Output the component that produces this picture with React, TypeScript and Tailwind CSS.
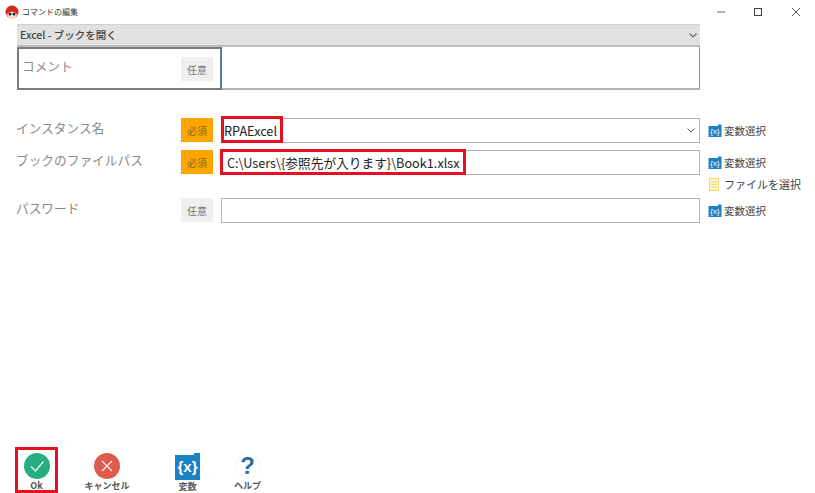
const jp = "font-['Noto_Sans_CJK_JP','Noto_Sans',sans-serif]";

function VarIcon({ size = 14 }: { size?: number }) {
  return (
    <svg width={size} height={size} viewBox="0 0 14 14" className="shrink-0">
      <path d="M0.5 2 L10 2 L10 0.5 L13.5 0.5 L13.5 13 L0.5 13 Z" fill="#1b82c5" />
      <text x="7" y="10" textAnchor="middle" fontSize="8" fill="#fff" fontFamily="'Liberation Sans',sans-serif">{"{x}"}</text>
    </svg>
  );
}

function VarLink() {
  return (
    <div className="flex items-center gap-[2px] h-[25px] text-[10.5px] text-[#444]">
      <VarIcon />
      <span className="pt-[1px]">変数選択</span>
    </div>
  );
}

function Badge({ required, className = "" }: { required?: boolean; className?: string }) {
  return (
    <div
      className={`w-[32px] h-[24px] shrink-0 flex items-center justify-center text-[10px] ${
        required ? "bg-[#ffa500] text-[#8a6a20]" : "bg-[#efefef] text-[#777]"
      } ${className}`}
    >
      {required ? "必須" : "任意"}
    </div>
  );
}

function Row({
  label,
  required,
  children,
  chevron,
  className = "",
  right,
}: {
  label: string;
  required?: boolean;
  children?: React.ReactNode;
  chevron?: boolean;
  className?: string;
  right?: React.ReactNode;
}) {
  return (
    <div className={`flex items-start ${className}`}>
      <div className="-ml-[1px] w-[165px] shrink-0 text-[12.7px] leading-[20px] text-[#8a8a8a]">{label}</div>
      <Badge required={required} />
      <div className="relative ml-[8px] w-[479px] h-[25px] shrink-0 border border-[#b4b4b4] bg-white flex items-center justify-between">
        {children}
        {chevron && (
          <svg width="8" height="5" viewBox="0 0 8 5" className="mr-[4px]">
            <path d="M0.5 0.5 L4 4 L7.5 0.5" fill="none" stroke="#666" strokeWidth="1" />
          </svg>
        )}
      </div>
      <div className="ml-[8px]">{right}</div>
    </div>
  );
}

function FootLabel({ children }: { children: React.ReactNode }) {
  return <div className="mt-[1px] text-[9px] leading-[12px] font-bold text-[#555] text-center whitespace-nowrap">{children}</div>;
}

export default function App() {
  return (
    <div className={`w-[815px] h-[493px] bg-white flex flex-col overflow-hidden relative ${jp}`}>
      <div className="h-[24px] shrink-0 flex items-center pl-[5px]">
        <svg width="14" height="14" viewBox="0 0 14 14" className="shrink-0">
          <circle cx="7" cy="7" r="6.5" fill="#d9261c" />
          <path d="M2 9 Q7 4 12 9 Q11 13.5 7 13.5 Q3 13.5 2 9 Z" fill="#f4e4d8" />
          <circle cx="5" cy="9" r="1.5" fill="#222" />
          <circle cx="9" cy="9" r="1.5" fill="#222" />
        </svg>
        <span className="ml-[3px] text-[8px] text-[#333]">コマンドの編集</span>
        <div className="ml-auto flex items-center text-[#444]">
          <svg width="10" height="10" viewBox="0 0 10 10" className="mr-[27px]">
            <path d="M1 5 H9" stroke="#666" strokeWidth="1" />
          </svg>
          <svg width="10" height="10" viewBox="0 0 10 10" className="mr-[28px]">
            <rect x="1.5" y="1.5" width="7" height="7" fill="none" stroke="#444" strokeWidth="1" />
          </svg>
          <svg width="10" height="10" viewBox="0 0 10 10" className="mr-[14px]">
            <path d="M1 1 L9 9 M9 1 L1 9" stroke="#444" strokeWidth="0.9" />
          </svg>
        </div>
      </div>

      <div className="pl-[17px] flex flex-col">
        <div className="w-[683px] h-[23px] bg-[#e1e1e1] border-b-2 border-[#bdbdbd] border-t border-t-[#d0d0d0] flex items-center justify-between pl-[3px] pr-[3px]">
          <span className="text-[10.5px] font-medium text-[#444]">Excel - ブックを開く</span>
          <svg width="8" height="5" viewBox="0 0 8 5">
            <path d="M0.5 0.5 L4 4 L7.5 0.5" fill="none" stroke="#666" strokeWidth="1.2" />
          </svg>
        </div>
        <div className="flex w-[683px] h-[43px]">
          <div className="w-[205px] h-full border-2 border-[#7a7a7a] border-r-[#4f7ea6] flex items-start justify-between pt-[7px] pl-[3px] pr-[7px]">
            <span className="text-[12.7px] leading-[20px] text-[#8a8a8a]">コメント</span>
            <Badge className="mt-[1px]" />
          </div>
          <div className="flex-1 h-full border-b-2 border-b-[#b4b4b4] border-r border-r-[#5aa5dc]" />
        </div>

        <Row label="インスタンス名" required chevron className="mt-[28px]" right={<VarLink />}>
          <span className="pl-[2px] text-[12.7px] text-[#222]">RPAExcel</span>
          <div className="absolute left-[-1px] top-[-3px] w-[62px] h-[27px] border-[3px] border-[#e8101e]" />
        </Row>
        <Row
          label="ブックのファイルパス"
          required
          className="mt-[7px]"
          right={
            <div className="flex flex-col">
              <VarLink />
              <div className="flex items-center gap-[5px] h-[19px] text-[11px] text-[#444]">
                <svg width="10" height="13" viewBox="0 0 10 13" className="ml-[1px] shrink-0">
                  <rect x="0.5" y="0.5" width="9" height="12" fill="#fff6c8" stroke="#f2d76c" />
                  <path d="M2.5 4 H7.5 M2.5 6.5 H7.5 M2.5 9 H7.5" stroke="#f2d76c" strokeWidth="1" />
                </svg>
                <span>ファイルを選択</span>
              </div>
            </div>
          }
        >
          <span className="pl-[5px] text-[12.7px] text-[#222] whitespace-nowrap">C:\Users\{"{"}参照先が入ります{"}"}\Book1.xlsx</span>
          <div className="absolute left-[-2px] top-[-2px] w-[246px] h-[26px] border-[3px] border-[#e8101e]" />
        </Row>
        <Row label="パスワード" className="mt-[4px]" right={<VarLink />} />
      </div>

      <div className="mt-auto h-[46px] flex items-start shrink-0">
        <div className="ml-[15px] w-[43px] h-[46px] border-[3px] border-[#e8101e] flex flex-col items-center pt-[3px]">
          <svg width="26" height="26" viewBox="0 0 26 26" className="shrink-0">
            <circle cx="13" cy="13" r="13" fill="#27ae80" />
            <path d="M7 13.5 L11.5 18 L19.5 8.5" fill="none" stroke="#e8f6f0" strokeWidth="1.4" />
          </svg>
          <FootLabel>Ok</FootLabel>
        </div>
        <div className="ml-[24px] w-[50px] flex flex-col items-center pt-[6px]">
          <svg width="26" height="26" viewBox="0 0 26 26" className="shrink-0">
            <circle cx="13" cy="13" r="13" fill="#dc5a4e" />
            <path d="M8 8 L18 18 M18 8 L8 18" fill="none" stroke="#f9e6e4" strokeWidth="1.4" />
          </svg>
          <FootLabel>キャンセル</FootLabel>
        </div>
        <div className="ml-[43px] w-[25px] flex flex-col items-center pt-[6px]">
          <svg width="25" height="27" viewBox="0 0 25 27" className="shrink-0">
            <path d="M0 2 L19 2 L19 0 L25 0 L25 27 L0 27 Z" fill="#1b82c5" />
            <text x="12.5" y="19" textAnchor="middle" fontSize="15" fontWeight="bold" fill="#fff" fontFamily="'Liberation Sans',sans-serif">{"{x}"}</text>
          </svg>
          <FootLabel>変数</FootLabel>
        </div>
        <div className="ml-[35px] w-[25px] flex flex-col items-center pt-[6px]">
          <div className="w-[26px] h-[26px] rounded-full border border-[#f4f4f4] flex items-center justify-center text-[24px] leading-[24px] font-bold text-[#2f6f9f] font-['Liberation_Sans',sans-serif]">?</div>
          <FootLabel>ヘルプ</FootLabel>
        </div>
      </div>
    </div>
  );
}
